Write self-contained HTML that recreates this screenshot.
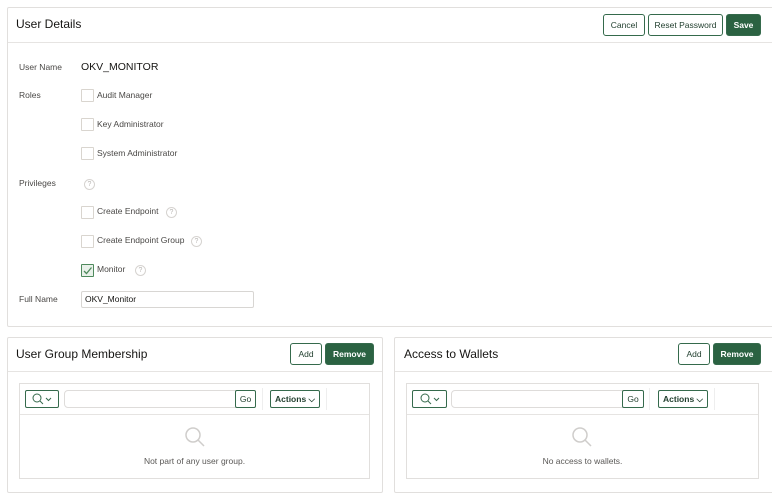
<!DOCTYPE html>
<html><head><style>
body{margin:0;width:772px;height:502px;background:#fff;font-family:"Liberation Sans",sans-serif;color:#161513;position:relative;overflow:hidden}
.a{position:absolute}
.panel{position:absolute;border:1px solid #e1dfdd;border-radius:2px;background:#fff}
.btn{position:absolute;box-sizing:border-box;border:1px solid #356a4c;border-radius:3px;background:#fff;color:#1f3d2c;font-size:8.5px;text-align:center;line-height:20px;height:22px}
.btn.p{background:#2b6242;color:#fff;font-weight:bold}
.lbl{position:absolute;font-size:8.5px;color:#4a4846}
.cb{position:absolute;width:11px;height:11px;border:1px solid #d9d5cf;border-radius:1px;background:#fff}
.help{position:absolute;width:9px;height:9px;border:1px solid #d6d3d0;border-radius:50%;font-size:7px;color:#b8b5b2;text-align:center;line-height:9px}
.sbtn{position:absolute;box-sizing:border-box;border:1px solid #356a4c;border-radius:2px;height:18px;font-size:8.5px;color:#1f3d2c;text-align:center;line-height:16px;background:#fff}
.t{position:absolute;font-size:12px}
</style></head><body>

<div class="panel" style="left:7px;top:7px;width:770px;height:318px"></div>
<div class="a" style="left:8px;top:42px;width:770px;height:1px;background:#e6e4e2"></div>
<div class="t" style="left:16px;top:17px">User Details</div>
<div class="btn" style="left:603px;top:14px;width:42px">Cancel</div>
<div class="btn" style="left:648px;top:14px;width:75px">Reset Password</div>
<div class="btn p" style="left:726px;top:14px;width:35px">Save</div>

<div class="lbl" style="left:19px;top:62px">User Name</div>
<div class="a" style="left:81px;top:61px;font-size:10.5px">OKV_MONITOR</div>
<div class="lbl" style="left:19px;top:90px">Roles</div>
<div class="cb" style="left:81px;top:89px"></div><div class="lbl" style="left:97px;top:90px">Audit Manager</div>
<div class="cb" style="left:81px;top:118px"></div><div class="lbl" style="left:97px;top:119px">Key Administrator</div>
<div class="cb" style="left:81px;top:147px"></div><div class="lbl" style="left:97px;top:148px">System Administrator</div>
<div class="lbl" style="left:19px;top:178px">Privileges</div>
<div class="help" style="left:84px;top:179px">?</div>
<div class="cb" style="left:81px;top:206px"></div><div class="lbl" style="left:97px;top:206px">Create Endpoint</div>
<div class="help" style="left:166px;top:207px">?</div>
<div class="cb" style="left:81px;top:235px"></div><div class="lbl" style="left:97px;top:235px">Create Endpoint Group</div>
<div class="help" style="left:191px;top:236px">?</div>
<div class="cb" style="left:81px;top:264px;border-color:#4f8a5d;background:#e9f1ea"><svg width="11" height="11" style="position:absolute;left:0;top:0"><path d="M2 6 L4.5 8.5 L9.5 2.5" stroke="#4f8a5d" stroke-width="1.3" fill="none"/></svg></div>
<div class="lbl" style="left:97px;top:264px">Monitor</div>
<div class="help" style="left:135px;top:265px">?</div>
<div class="lbl" style="left:19px;top:294px">Full Name</div>
<div class="a" style="left:81px;top:291px;width:173px;height:17px;border:1px solid #d8d6d3;border-radius:2px;box-sizing:border-box;font-size:8.5px;line-height:15px;padding-left:3px">OKV_Monitor</div>

<!-- left panel -->
<div class="panel" style="left:7px;top:337px;width:374px;height:154px"></div>
<div class="a" style="left:8px;top:371px;width:374px;height:1px;background:#e6e4e2"></div>
<div class="t" style="left:16px;top:347px">User Group Membership</div>
<div class="btn" style="left:290px;top:343px;width:32px">Add</div>
<div class="btn p" style="left:325px;top:343px;width:49px">Remove</div>
<div class="a" style="left:19px;top:383px;width:351px;height:96px;border:1px solid #e1dfdd;box-sizing:border-box"></div>
<div class="a" style="left:20px;top:414px;width:349px;height:1px;background:#e6e4e2"></div>
<div class="sbtn" style="left:25px;top:390px;width:34px"><svg width="30" height="16"><circle cx="10" cy="7" r="4" stroke="#356a4c" fill="none"/><path d="M13 10 L16 13" stroke="#356a4c"/><path d="M19 7 L21.5 9.5 L24 7" stroke="#356a4c" fill="none"/></svg></div>
<div class="a" style="left:64px;top:390px;width:192px;height:18px;border:1px solid #dedcda;border-radius:4px;box-sizing:border-box"></div>
<div class="sbtn" style="left:235px;top:390px;width:21px">Go</div>
<div class="a" style="left:262px;top:388px;width:1px;height:22px;background:#eee"></div>
<div class="sbtn" style="left:270px;top:390px;width:50px;font-weight:bold">Actions ⌵</div>
<div class="a" style="left:326px;top:388px;width:1px;height:22px;background:#eee"></div>
<svg class="a" style="left:183px;top:426px" width="26" height="24"><circle cx="10" cy="9" r="7" stroke="#cfcdcb" stroke-width="1.5" fill="none"/><path d="M15 14 L21 20" stroke="#cfcdcb" stroke-width="1.5"/></svg>
<div class="a" style="left:19px;top:456px;width:351px;text-align:center;font-size:8.5px;color:#5a5856">Not part of any user group.</div>

<!-- right panel -->
<div class="panel" style="left:394px;top:337px;width:390px;height:154px"></div>
<div class="a" style="left:395px;top:371px;width:390px;height:1px;background:#e6e4e2"></div>
<div class="t" style="left:404px;top:347px">Access to Wallets</div>
<div class="btn" style="left:678px;top:343px;width:32px">Add</div>
<div class="btn p" style="left:713px;top:343px;width:48px">Remove</div>
<div class="a" style="left:406px;top:383px;width:353px;height:96px;border:1px solid #e1dfdd;box-sizing:border-box"></div>
<div class="a" style="left:407px;top:414px;width:351px;height:1px;background:#e6e4e2"></div>
<div class="sbtn" style="left:412px;top:390px;width:35px"><svg width="30" height="16"><circle cx="10" cy="7" r="4" stroke="#356a4c" fill="none"/><path d="M13 10 L16 13" stroke="#356a4c"/><path d="M19 7 L21.5 9.5 L24 7" stroke="#356a4c" fill="none"/></svg></div>
<div class="a" style="left:451px;top:390px;width:193px;height:18px;border:1px solid #dedcda;border-radius:4px;box-sizing:border-box"></div>
<div class="sbtn" style="left:622px;top:390px;width:22px">Go</div>
<div class="a" style="left:649px;top:388px;width:1px;height:22px;background:#eee"></div>
<div class="sbtn" style="left:658px;top:390px;width:50px;font-weight:bold">Actions ⌵</div>
<div class="a" style="left:714px;top:388px;width:1px;height:22px;background:#eee"></div>
<svg class="a" style="left:570px;top:426px" width="26" height="24"><circle cx="10" cy="9" r="7" stroke="#cfcdcb" stroke-width="1.5" fill="none"/><path d="M15 14 L21 20" stroke="#cfcdcb" stroke-width="1.5"/></svg>
<div class="a" style="left:406px;top:456px;width:353px;text-align:center;font-size:8.5px;color:#5a5856">No access to wallets.</div>
</body></html>
